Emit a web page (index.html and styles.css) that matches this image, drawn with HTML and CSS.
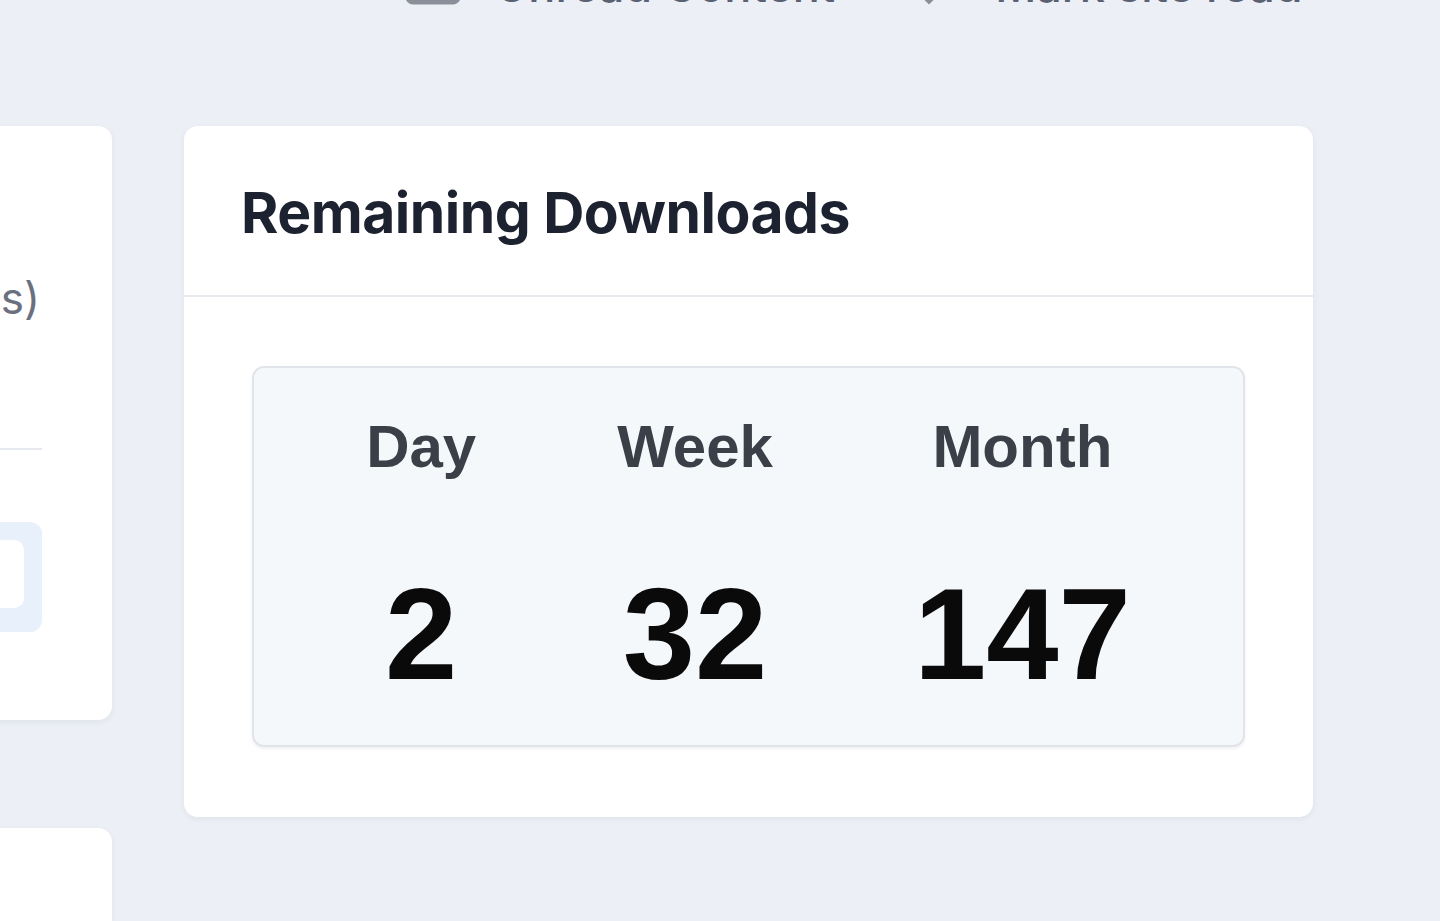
FILE: index.html
```html
<!DOCTYPE html>
<html lang="en">
  <head>
    <meta charset="UTF-8" />
    <meta name="viewport" content="width=device-width, initial-scale=1.0" />
    <title>Remaining Downloads</title>
    <link rel="stylesheet" href="styles.css">
  </head>
  <body>
    <nav class="topnav">
      <a class="nav-link unread">
        <svg class="nav-icon" width="56" height="44" viewBox="0 0 56 44">
          <rect x="3" y="3" width="50" height="38" rx="5" fill="none" stroke="#8a8f99" stroke-width="5" />
        </svg>
        <span>Unread Content</span>
      </a>
      <a class="nav-link markread">
        <svg class="nav-icon small" width="24" height="44" viewBox="0 0 24 44">
          <path d="M2 30 L12 40 L22 30" fill="none" stroke="#8a8f99" stroke-width="5" stroke-linecap="round" />
        </svg>
        <span>Mark site read</span>
      </a>
    </nav>

    <main class="layout">
      <div class="side">
        <section class="card side-card">
          <p class="side-text"><span>Downloads (files)</span></p>
          <hr class="side-divider" />
          <div class="side-box"><div class="side-inner"></div></div>
        </section>
        <section class="card side-card second"></section>
      </div>

      <section class="card downloads">
        <header class="card-head">
          <h2>Remaining Downloads</h2>
        </header>
        <div class="card-body">
          <div class="stats">
            <div class="stat">
              <span class="stat-label">Day</span>
              <span class="stat-value">2</span>
            </div>
            <div class="stat">
              <span class="stat-label">Week</span>
              <span class="stat-value">32</span>
            </div>
            <div class="stat">
              <span class="stat-label">Month</span>
              <span class="stat-value">147</span>
            </div>
          </div>
        </div>
      </section>
    </main>
  </body>
</html>
```

FILE: styles.css
```css
/* General */
body {
  margin: 0;
  padding: 0;
  background: #eceff5;
  font-family: Inter, "Liberation Sans", Arial, sans-serif;
  color: #1e2330;
  overflow: hidden;
  height: 921px;
}

/* Top navigation (mostly cut off) */
.topnav {
  display: flex;
  align-items: flex-end;
  height: 60px;
  margin-top: -52px;
  padding-left: 405px;
}

.nav-link {
  display: flex;
  align-items: flex-end;
  gap: 34px;
  font-size: 45px;
  font-weight: 500;
  color: #5a6172;
  line-height: 1;
}

.nav-link.unread {
  margin-right: 82px;
}

.nav-icon {
  display: block;
  margin-bottom: 3px;
}

.nav-icon.small {
  margin-right: 20px;
}

/* Layout */
.layout {
  display: flex;
  gap: 72px;
  margin-top: 118px;
  margin-left: -288px;
}

.side {
  display: flex;
  flex-direction: column;
  gap: 108px;
  width: 400px;
  flex-shrink: 0;
}

.card {
  background: #ffffff;
  border-radius: 14px;
  box-shadow: 0 2px 6px rgba(20, 30, 60, 0.06);
}

.side-card {
  height: 594px;
  padding-top: 150px;
  box-sizing: border-box;
  overflow: hidden;
}

/* continues below the fold */
.side-card.second {
  height: 93px;
  padding-top: 0;
  border-radius: 14px 14px 0 0;
}

.side-text {
  margin: 0 72px 0 0;
  display: flex;
  justify-content: flex-end;
  font-size: 44px;
  color: #6b7080;
  white-space: nowrap;
  line-height: 1;
}

.side-divider {
  border: none;
  border-top: 2px solid #e6e9ee;
  margin: 128px 70px 72px 0;
}

.side-box {
  height: 110px;
  margin-right: 70px;
  background: #e7f0fb;
  border-radius: 12px;
  padding: 18px 18px 24px 0;
  box-sizing: border-box;
}

.side-inner {
  height: 100%;
  background: #ffffff;
  border-radius: 10px;
}

/* Remaining downloads card */
.downloads {
  width: 1129px;
  height: 691px;
  flex-shrink: 0;
}

.card-head {
  height: 171px;
  border-bottom: 2px solid #e8ebf0;
  box-sizing: border-box;
  display: flex;
  align-items: center;
  padding: 4px 57px 0;
}

.card-head h2 {
  margin: 0;
  font-size: 57px;
  font-weight: 700;
  letter-spacing: -0.5px;
  color: #1d2230;
}

.card-body {
  padding: 69px 68px;
}

.stats {
  height: 381px;
  box-sizing: border-box;
  background: #f5f8fb;
  border: 2px solid #e1e5ea;
  border-radius: 12px;
  box-shadow: 0 2px 3px rgba(0, 0, 0, 0.06);
  display: flex;
  justify-content: center;
  gap: 141px;
  padding-top: 43px;
  font-family: "Liberation Sans", Arial, sans-serif;
}

.stat {
  display: flex;
  flex-direction: column;
  align-items: center;
}

.stat-label {
  font-size: 60px;
  font-weight: 700;
  color: #3a3f48;
  line-height: 1.2;
}

.stat-value {
  margin-top: 86px;
  font-size: 130px;
  font-weight: 700;
  color: #0a0a0a;
  line-height: 1;
}
```
